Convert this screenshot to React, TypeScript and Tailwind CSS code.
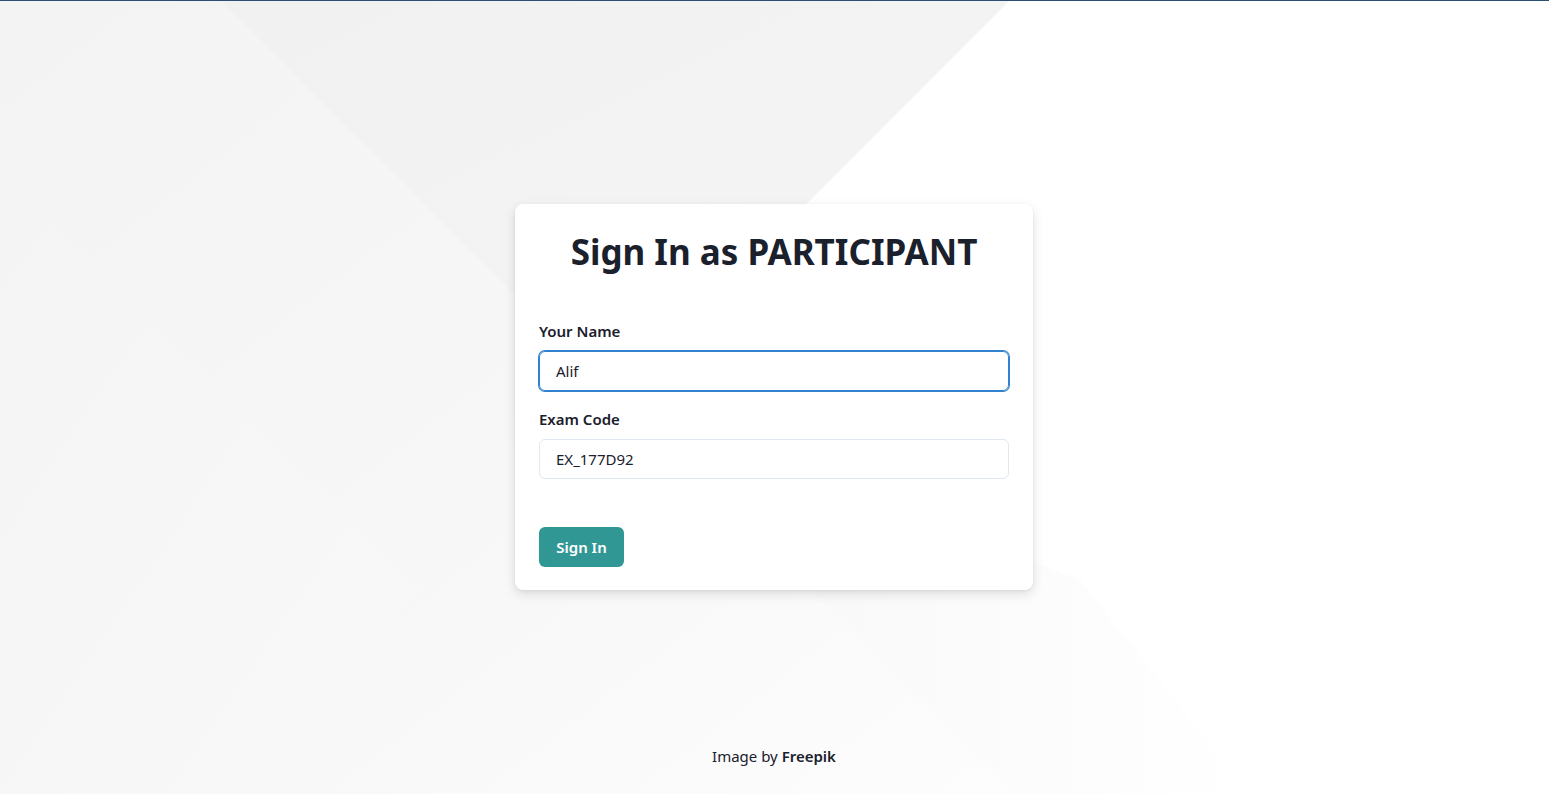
export default function App() {
  return (
    <div className="relative min-h-screen w-full overflow-hidden bg-white font-['Noto_Sans',sans-serif] text-[#1a202c]">
      {/* background image (freepik-like white geometry) */}
      <svg
        className="absolute inset-0 h-full w-full"
        viewBox="0 0 1549 794"
        preserveAspectRatio="none"
        aria-hidden="true"
      >
        <defs>
          <linearGradient id="g1" x1="0" y1="0" x2="1" y2="1">
            <stop offset="0" stopColor="#f3f3f3" />
            <stop offset="0.55" stopColor="#f7f7f7" />
            <stop offset="1" stopColor="#fdfdfd" />
          </linearGradient>
          <linearGradient id="g2" x1="0" y1="0" x2="1" y2="1">
            <stop offset="0" stopColor="#f1f1f1" />
            <stop offset="1" stopColor="#f5f5f5" />
          </linearGradient>
          <linearGradient id="g3" x1="0" y1="0" x2="1" y2="0">
            <stop offset="0" stopColor="#f6f6f6" />
            <stop offset="1" stopColor="#ffffff" />
          </linearGradient>
          <linearGradient id="g4" x1="0" y1="0" x2="1" y2="1">
            <stop offset="0" stopColor="#f4f4f4" />
            <stop offset="1" stopColor="#f9f9f9" />
          </linearGradient>
        </defs>
        <polygon points="0,0 1010,0 615,395 1014,794 0,794" fill="url(#g1)" />
        <polygon points="0,170 420,590 216,794 0,794" fill="url(#g4)" />
        <polygon points="220,0 1010,0 615,395" fill="url(#g2)" />
        <polygon points="615,395 1080,580 1250,794 1014,794" fill="url(#g3)" />
      </svg>

      <div className="relative h-[1px] w-full bg-[#2c4f74]" />

      <div className="relative grid h-[792px] grid-rows-[1fr_auto_1fr] justify-items-center pr-[1px]">
        <div />
        <div className="w-[518px] rounded-lg bg-white px-6 pt-6 pb-[23px] shadow-[0_4px_12px_rgba(0,0,0,0.12),0_1px_3px_rgba(0,0,0,0.06)]">
          <h1 className="mb-[43px] text-center text-[35px] leading-[48px] font-bold">Sign In as PARTICIPANT</h1>

          <label className="mb-2 block text-[15px] leading-6 font-semibold">Your Name</label>
          <input
            autoFocus
            defaultValue="Alif"
            className="block h-10 w-full rounded-md border border-[#3182ce] px-4 text-[15px] outline-none ring-1 ring-[#3182ce]"
          />

          <label className="mt-4 mb-2 block text-[15px] leading-6 font-semibold">Exam Code</label>
          <input
            defaultValue="EX_177D92"
            className="block h-10 w-full rounded-md border border-[#e2e8f0] px-4 text-[15px] outline-none"
          />

          <button className="mt-12 h-10 w-[85px] rounded-md bg-[#319795] text-[15px] font-semibold text-white">
            Sign In
          </button>
        </div>
        <div className="self-end pb-[25px] text-[15px] leading-6">
          Image by <span className="font-semibold">Freepik</span>
        </div>
      </div>
    </div>
  );
}
